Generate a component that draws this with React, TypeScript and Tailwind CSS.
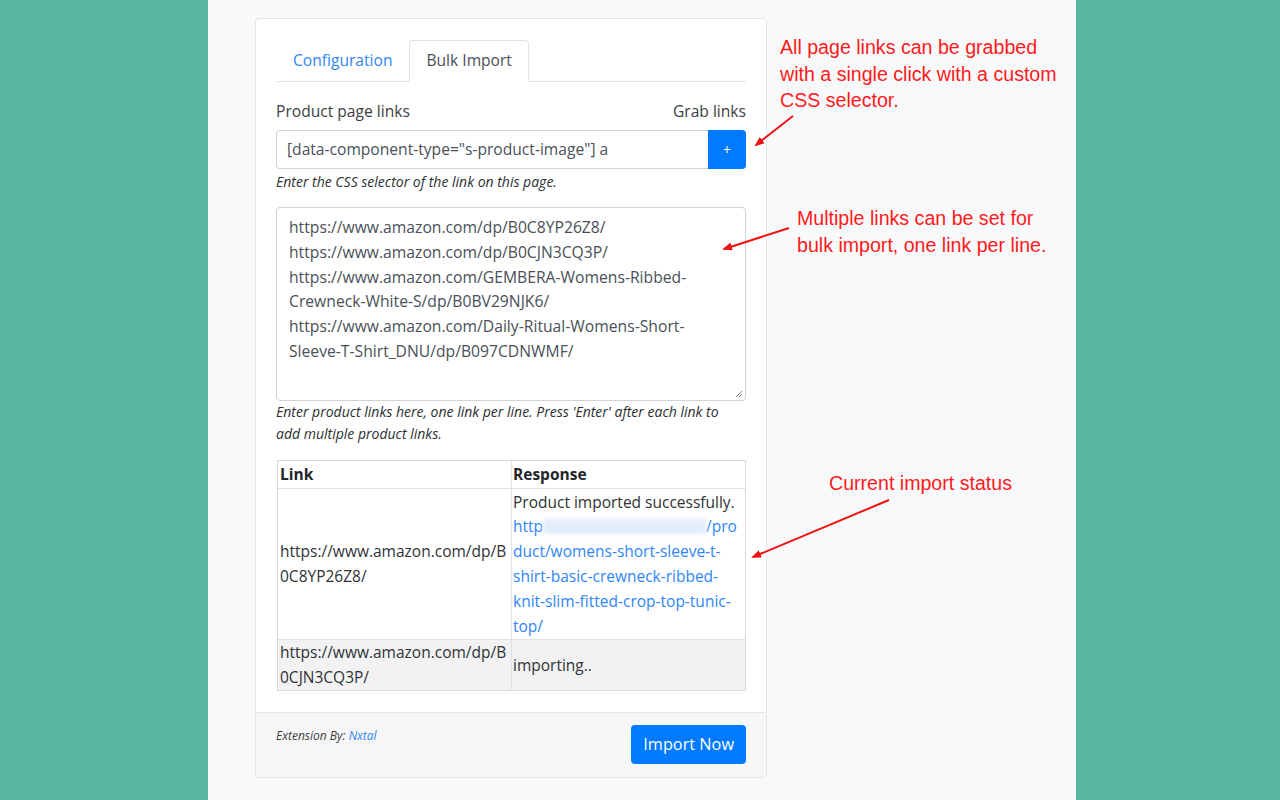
import React from "react";

const sans = { fontFamily: '"Open Sans", "Noto Sans", sans-serif' };
const red = { fontFamily: '"Liberation Sans", Arial, sans-serif' };

export default function App() {
  const lines = [
    "https://www.amazon.com/dp/B0C8YP26Z8/",
    "https://www.amazon.com/dp/B0CJN3CQ3P/",
    "https://www.amazon.com/GEMBERA-Womens-Ribbed-",
    "Crewneck-White-S/dp/B0BV29NJK6/",
    "https://www.amazon.com/Daily-Ritual-Womens-Short-",
    "Sleeve-T-Shirt_DNU/dp/B097CDNWMF/",
  ];
  return (
    <div className="relative w-full h-[800px] bg-[#58b7a0] overflow-hidden">
      <div className="ml-[208px] w-[868px] h-[800px] bg-[#f8f9fa] pt-[18px] pl-[47px]" style={sans}>
        <div className="w-[512px] h-[760px] bg-white border border-[#e3e5e8] rounded-[4px] flex flex-col overflow-hidden">
          <div className="px-[20px] pt-[21px] flex-1">
            {/* Tabs */}
            <div className="flex border-b border-[#dee2e6] h-[42px]">
              <div className="px-[17px] h-[41px] flex items-center text-[15.6px] text-[#2f86f6]">Configuration</div>
              <div className="px-[16px] h-[42px] flex items-center text-[15.6px] text-[#495057] bg-white border border-[#dee2e6] border-b-white rounded-t-[4px] -mb-px">Bulk Import</div>
            </div>
            {/* label row */}
            <div className="flex justify-between mt-[17px] text-[15.6px] text-[#3b3f44] leading-[24px]">
              <span>Product page links</span>
              <span>Grab links</span>
            </div>
            <div className="mt-[7px] flex h-[39px]">
              <div className="flex-1 border border-[#ced4da] border-r-0 rounded-l-[4px] flex items-center pl-[10px] text-[15.6px] text-[#495057]">
                [data-component-type="s-product-image"] a
              </div>
              <div className="w-[38px] bg-[#007bff] rounded-r-[4px] flex items-center justify-center text-white text-[14px]">+</div>
            </div>
            <div className="mt-[2px] text-[14px] italic text-[#2b2f33] leading-[21px]">Enter the CSS selector of the link on this page.</div>
            {/* textarea */}
            <div className="relative mt-[15px] h-[194px] border border-[#ced4da] rounded-[4px] pl-[12px] pt-[7px] text-[15.7px] text-[#495057] leading-[24.8px]">
              {lines.map((l) => (
                <div key={l}>{l}</div>
              ))}
              <svg className="absolute right-[2px] bottom-[2px]" width="9" height="9" viewBox="0 0 9 9">
                <line x1="8" y1="2" x2="2" y2="8" stroke="#888" strokeWidth="1" />
                <line x1="8" y1="5" x2="5" y2="8" stroke="#888" strokeWidth="1" />
              </svg>
            </div>
            <div className="mt-[0px] text-[14px] italic text-[#2b2f33] leading-[22px]">
              Enter product links here, one link per line. Press 'Enter' after each link to add multiple product links.
            </div>
            {/* table */}
            <div className="mt-[15px] ml-px w-[469px] border border-[#d8dbde] text-[15.5px] text-[#212529] leading-[24.8px]">
              <div className="flex h-[28px] border-b border-[#dee2e6]">
                <div className="w-[234px] border-r border-[#dee2e6] pl-[2px] flex items-center font-bold">Link</div>
                <div className="flex-1 pl-[1px] flex items-center font-bold">Response</div>
              </div>
              <div className="flex h-[151px] border-b border-[#dee2e6]">
                <div className="w-[234px] border-r border-[#dee2e6] pl-[2px] flex flex-col justify-center text-[#2f3236]">
                  <span>https://www.amazon.com/dp/B</span>
                  <span>0C8YP26Z8/</span>
                </div>
                <div className="flex-1 pl-[1px] flex flex-col justify-center text-[#2f3236]">
                  <span>Product imported successfully.</span>
                  <span className="text-[#2f86f6] flex items-center">
                    http
                    <span className="inline-block w-[163px] h-[15px] bg-[#e3ecfb] blur-[2px]"></span>
                    /pro
                  </span>
                  <span className="text-[#2f86f6]">duct/womens-short-sleeve-t-</span>
                  <span className="text-[#2f86f6]">shirt-basic-crewneck-ribbed-</span>
                  <span className="text-[#2f86f6]">knit-slim-fitted-crop-top-tunic-</span>
                  <span className="text-[#2f86f6]">top/</span>
                </div>
              </div>
              <div className="flex h-[50px] bg-[#f2f2f2]">
                <div className="w-[234px] border-r border-[#dee2e6] pl-[2px] flex flex-col justify-center text-[#2f3236]">
                  <span>https://www.amazon.com/dp/B</span>
                  <span>0CJN3CQ3P/</span>
                </div>
                <div className="flex-1 pl-[1px] flex items-center text-[#2f3236]">importing..</div>
              </div>
            </div>
          </div>
          {/* footer */}
          <div className="h-[65px] bg-[#f7f7f7] border-t border-[#e3e5e8] px-[20px] flex items-start justify-between">
            <div className="mt-[14px] text-[12px] italic text-[#3b3f44]">
              Extension By: <span className="text-[#2f86f6]">Nxtal</span>
            </div>
            <div className="mt-[12px] h-[39px] px-[12px] bg-[#007bff] rounded-[4px] flex items-center text-white text-[16.3px]">Import Now</div>
          </div>
        </div>
      </div>

      {/* Annotations */}
      <div className="absolute left-[780px] top-[34px] text-[19.6px] leading-[26.5px] text-[#ff1a1a]" style={red}>
        <div>All page links can be grabbed</div>
        <div>with a single click with a custom</div>
        <div>CSS selector.</div>
      </div>
      <div className="absolute left-[797px] top-[205px] text-[19.6px] leading-[26.5px] text-[#ff1a1a]" style={red}>
        <div>Multiple links can be set for</div>
        <div>bulk import, one link per line.</div>
      </div>
      <div className="absolute left-[829px] top-[470px] text-[19.6px] leading-[26.5px] text-[#ff1a1a]" style={red}>
        <div>Current import status</div>
      </div>
      <svg className="absolute left-0 top-0 pointer-events-none" width="1280" height="800" viewBox="0 0 1280 800">
        <defs>
          <marker id="ah" markerWidth="10" markerHeight="8" refX="8" refY="4" orient="auto" markerUnits="userSpaceOnUse">
            <polygon points="0,0 10,4 0,8" fill="#ee1111" />
          </marker>
        </defs>
        <line x1="793" y1="116" x2="756" y2="145" stroke="#ee1111" strokeWidth="2" markerEnd="url(#ah)" />
        <line x1="789" y1="228" x2="724" y2="249" stroke="#ee1111" strokeWidth="2" markerEnd="url(#ah)" />
        <line x1="889" y1="500" x2="753" y2="557" stroke="#ee1111" strokeWidth="2" markerEnd="url(#ah)" />
      </svg>
    </div>
  );
}
